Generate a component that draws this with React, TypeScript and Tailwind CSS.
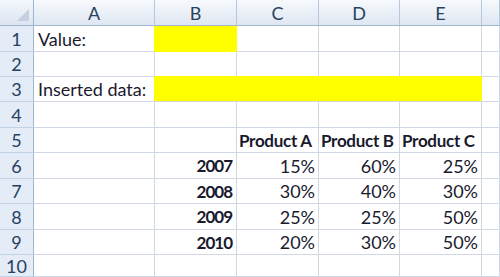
import React from "react";

const cols = ["A", "B", "C", "D", "E", ""];
const rowHeights = [26, 25, 25, 26, 25, 26, 25, 26, 25, 22];

type Cell = { t?: string; bold?: boolean; year?: boolean; right?: boolean; yellow?: boolean };

const data: Record<number, Cell[]> = {
  1: [{ t: "Value:" }, { yellow: true }, {}, {}, {}, {}],
  2: [{}, {}, {}, {}, {}, {}],
  3: [{ t: "Inserted data:" }],
  4: [{}, {}, {}, {}, {}, {}],
  5: [{}, {}, { t: "Product A", bold: true }, { t: "Product B", bold: true }, { t: "Product C", bold: true }, {}],
  6: [{}, { t: "2007", year: true, right: true }, { t: "15%", right: true }, { t: "60%", right: true }, { t: "25%", right: true }, {}],
  7: [{}, { t: "2008", year: true, right: true }, { t: "30%", right: true }, { t: "40%", right: true }, { t: "30%", right: true }, {}],
  8: [{}, { t: "2009", year: true, right: true }, { t: "25%", right: true }, { t: "25%", right: true }, { t: "50%", right: true }, {}],
  9: [{}, { t: "2010", year: true, right: true }, { t: "20%", right: true }, { t: "30%", right: true }, { t: "50%", right: true }, {}],
  10: [{}, {}, {}, {}, {}, {}],
};

export default function App() {
  const font = { fontFamily: "Lato, 'Open Sans', sans-serif" };
  return (
    <div
      className="w-[500px] h-[277px] overflow-hidden bg-white text-[18px] leading-none text-[#1a1a2e]"
      style={font}
    >
      <div className="grid grid-cols-[34px_121px_82px_82px_81px_82px_1fr]">
        {/* corner */}
        <div className="h-[26px] relative bg-gradient-to-b from-[#f4f7fb] to-[#dce5f1] border-r border-b border-[#9eb6ce]">
          <div className="absolute right-[4px] bottom-[4px] w-0 h-0 border-l-[12px] border-l-transparent border-b-[12px] border-b-[#c3d0e1]" />
        </div>
        {cols.map((c, i) => (
          <div
            key={i}
            className="h-[26px] flex items-center justify-center bg-gradient-to-b from-[#f7f9fc] to-[#dfe7f2] border-r border-b border-r-[#b5c8dd] border-b-[#9eb6ce] text-[#27415f]"
          >
            {c}
          </div>
        ))}
        {rowHeights.map((h, ri) => {
          const r = ri + 1;
          const cells = data[r];
          return (
            <React.Fragment key={r}>
              <div
                className="flex items-center justify-center bg-[#e4ecf7] border-r border-b border-r-[#9eb6ce] border-b-[#c3d3e6] text-[#27415f]"
                style={{ height: h }}
              >
                {r}
              </div>
              {r === 3 ? (
                <>
                  <div className="flex items-center pl-[4px] border-r border-b border-r-[#ffff00] border-b-[#d0d7e5] whitespace-nowrap">
                    Inserted data:
                  </div>
                  <div className="col-span-4 bg-[#ffff00] border-b border-[#d0d7e5]" />
                  <div className="border-r border-b border-[#d0d7e5]" />
                </>
              ) : (
                cells.map((c, ci) => {
                  const yellowRight = r === 1 && ci === 0;
                  const yellowBottom = r === 2 && ci >= 1 && ci <= 4;
                  return (
                    <div
                      key={ci}
                      className={
                        "flex items-center whitespace-nowrap overflow-visible border-r border-b " +
                        (c.yellow ? "bg-[#ffff00] border-[#ffff00] " : "border-[#d0d7e5] ") +
                        (yellowRight ? "border-r-[#ffff00] " : "") +
                        (yellowBottom ? "border-b-[#ffff00] " : "") +
                        (c.right ? "justify-end pr-[3px] " : c.bold ? "pl-[2px] " : "pl-[4px] ") +
                        (c.bold ? "font-bold text-[17px] tracking-[-0.3px] " : "") +
                        (c.year ? "font-bold text-[17px] tracking-[-1px] pr-[4px] " : "")
                      }
                    >
                      {c.t}
                    </div>
                  );
                })
              )}
            </React.Fragment>
          );
        })}
      </div>
    </div>
  );
}
